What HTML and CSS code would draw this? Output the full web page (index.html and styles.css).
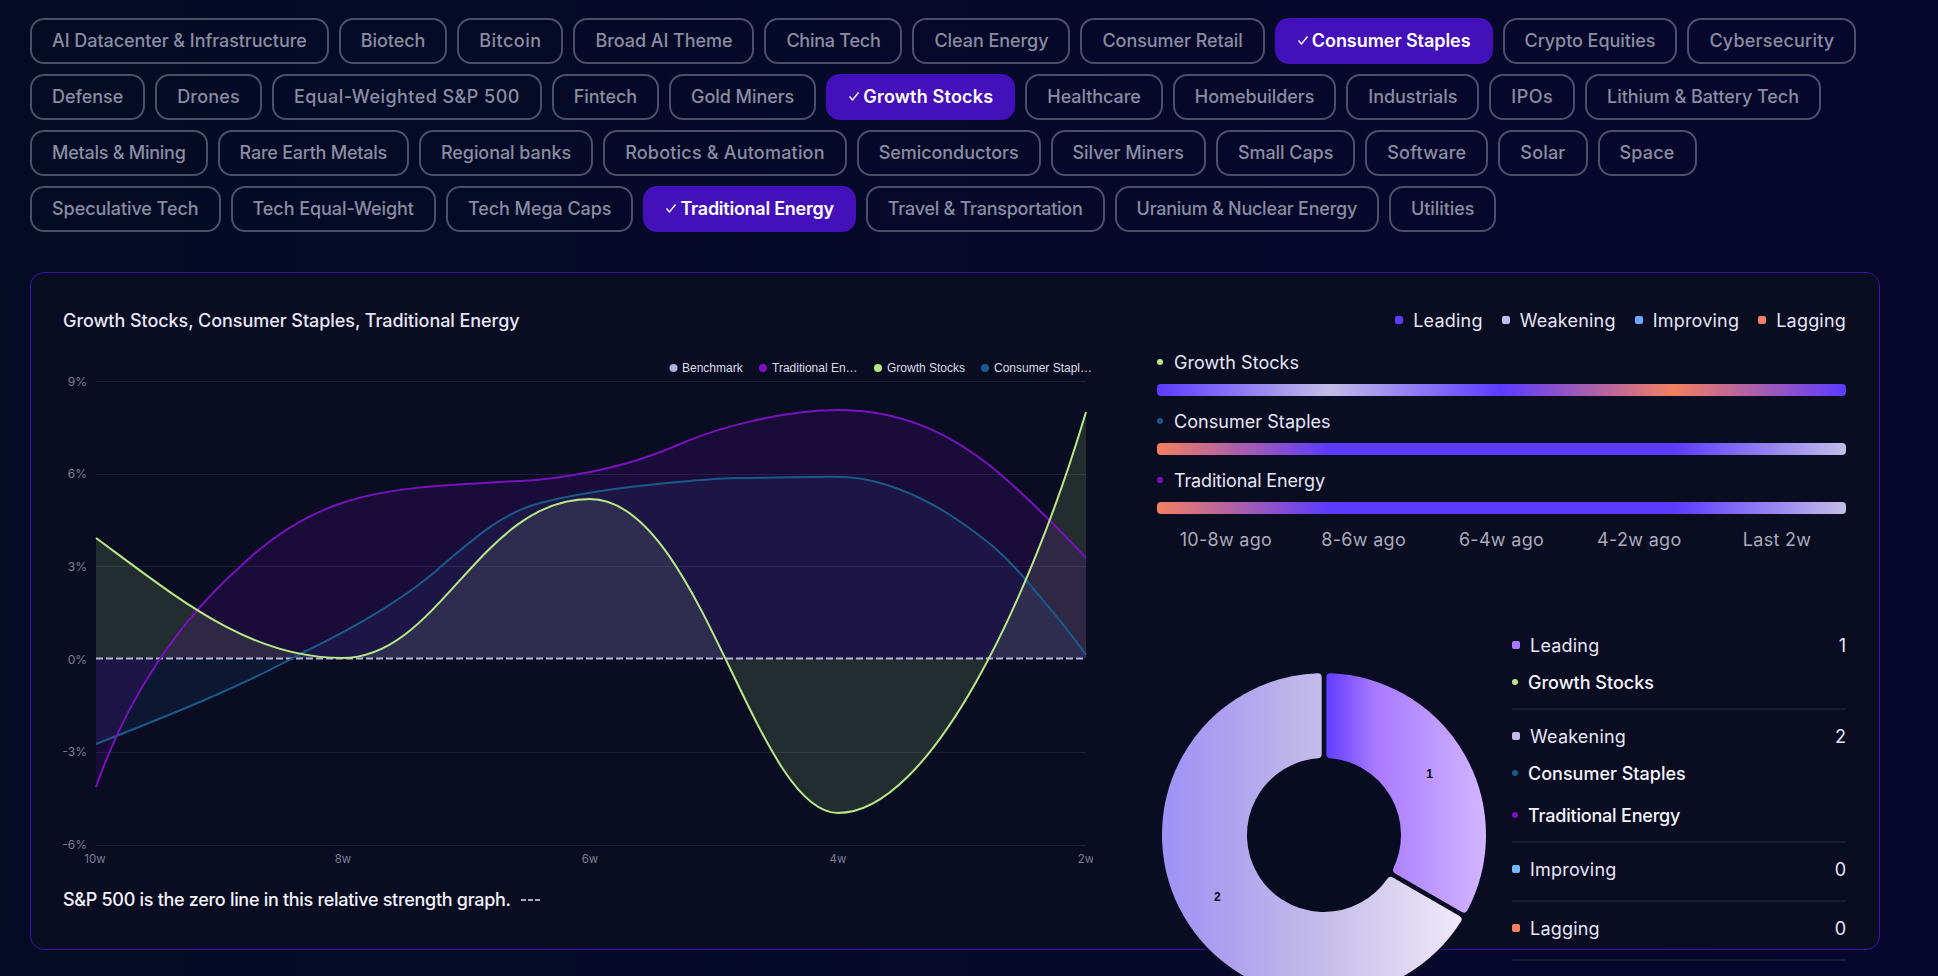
FILE: index.html
```html
<!DOCTYPE html>
<html lang="en">
<head>
<meta charset="utf-8">
<title>Sector comparison</title>
<link rel="stylesheet" href="styles.css">
</head>
<body>
<main class="page">
  <div class="chips">
    <span class="chip">AI Datacenter &amp; Infrastructure</span>
    <span class="chip">Biotech</span>
    <span class="chip chip-wide">Bitcoin</span>
    <span class="chip">Broad AI Theme</span>
    <span class="chip chip-tight">China Tech</span>
    <span class="chip">Clean Energy</span>
    <span class="chip">Consumer Retail</span>
    <span class="chip chip-on"><svg class="check" viewBox="0 0 12 12"><path d="M1.5 6.5 L4.5 10 L10.5 2.5"/></svg>Consumer Staples</span>
    <span class="chip">Crypto Equities</span>
    <span class="chip chip-loose">Cybersecurity</span>
    <span class="chip">Defense</span>
    <span class="chip chip-loose">Drones</span>
    <span class="chip chip-wide">Equal-Weighted S&amp;P 500</span>
    <span class="chip">Fintech</span>
    <span class="chip">Gold Miners</span>
    <span class="chip chip-on chip-loose"><svg class="check" viewBox="0 0 12 12"><path d="M1.5 6.5 L4.5 10 L10.5 2.5"/></svg>Growth Stocks</span>
    <span class="chip">Healthcare</span>
    <span class="chip">Homebuilders</span>
    <span class="chip">Industrials</span>
    <span class="chip chip-wide">IPOs</span>
    <span class="chip">Lithium &amp; Battery Tech</span>
    <span class="chip chip-tight">Metals &amp; Mining</span>
    <span class="chip chip-tight">Rare Earth Metals</span>
    <span class="chip">Regional banks</span>
    <span class="chip chip-loose">Robotics &amp; Automation</span>
    <span class="chip">Semiconductors</span>
    <span class="chip">Silver Miners</span>
    <span class="chip">Small Caps</span>
    <span class="chip chip-loose">Software</span>
    <span class="chip chip-loose">Solar</span>
    <span class="chip chip-loose">Space</span>
    <span class="chip">Speculative Tech</span>
    <span class="chip">Tech Equal-Weight</span>
    <span class="chip">Tech Mega Caps</span>
    <span class="chip chip-on chip-tight"><svg class="check" viewBox="0 0 12 12"><path d="M1.5 6.5 L4.5 10 L10.5 2.5"/></svg>Traditional Energy</span>
    <span class="chip chip-tight">Travel &amp; Transportation</span>
    <span class="chip chip-tight">Uranium &amp; Nuclear Energy</span>
    <span class="chip">Utilities</span>
  </div>

  <section class="card">
    <div class="left">
      <h2 class="title">Growth Stocks, Consumer Staples, Traditional Energy</h2>
      <svg class="chart" viewBox="63 340 1030 540" width="1030" height="540">
        <g class="grid">
          <line x1="96" x2="1086" y1="381.5" y2="381.5"/>
          <line x1="96" x2="1086" y1="474.5" y2="474.5"/>
          <line x1="96" x2="1086" y1="566.5" y2="566.5"/>
          <line x1="96" x2="1086" y1="752.5" y2="752.5"/>
          <line x1="96" x2="1086" y1="845.5" y2="845.5"/>
        </g>
        <g class="ylab">
          <text x="87" y="386">9%</text>
          <text x="87" y="478">6%</text>
          <text x="87" y="571">3%</text>
          <text x="87" y="664">0%</text>
          <text x="87" y="756">-3%</text>
          <text x="87" y="849">-6%</text>
        </g>
        <g class="xlab">
          <text x="95" y="863">10w</text>
          <text x="343" y="863">8w</text>
          <text x="590" y="863">6w</text>
          <text x="838" y="863">4w</text>
          <text x="1086" y="863">2w</text>
        </g>
        <path class="fill-green" d="M96,538 C180,600 250,658 342,658 C440,658 480,499 590,499 C700,499 755,813 838,813 C930,813 1030,600 1086,412 L1086,658 L96,658 Z"/>
        <path class="fill-blue" d="M96,744 C170,715 245,685 300,654 C350,630 405,600 445,563 C478,535 505,511 544,502 C580,493 625,487 667,483 C700,480 720,478 739,478 C780,478 820,476 846,477 C880,479 920,495 953,517 C985,538 1005,555 1026,580 C1045,603 1065,625 1086,655 L1086,658 L96,658 Z"/>
        <path class="fill-purple" d="M96,787 C128,695 180,620 241,566 C268,540 300,517 342,503 C385,488 440,485 520,481 C545,480 565,477 590,472 C625,465 650,457 685,442 C720,427 785,410 838,410 C900,410 950,432 999,473 C1030,500 1060,530 1086,558 L1086,658 L96,658 Z"/>
        <line class="zero" x1="96" x2="1086" y1="658.5" y2="658.5"/>
        <path class="line-blue" d="M96,744 C170,715 245,685 300,654 C350,630 405,600 445,563 C478,535 505,511 544,502 C580,493 625,487 667,483 C700,480 720,478 739,478 C780,478 820,476 846,477 C880,479 920,495 953,517 C985,538 1005,555 1026,580 C1045,603 1065,625 1086,655"/>
        <path class="line-purple" d="M96,787 C128,695 180,620 241,566 C268,540 300,517 342,503 C385,488 440,485 520,481 C545,480 565,477 590,472 C625,465 650,457 685,442 C720,427 785,410 838,410 C900,410 950,432 999,473 C1030,500 1060,530 1086,558"/>
        <path class="line-green" d="M96,538 C180,600 250,658 342,658 C440,658 480,499 590,499 C700,499 755,813 838,813 C930,813 1030,600 1086,412"/>
        <g class="clegend">
          <circle class="dot-bench" cx="673.5" cy="368" r="4"/>
          <text x="682" y="372">Benchmark</text>
          <circle class="dot-purple" cx="763" cy="368" r="4"/>
          <text x="772" y="372">Traditional En…</text>
          <circle class="dot-green" cx="878" cy="368" r="4"/>
          <text x="887" y="372">Growth Stocks</text>
          <circle class="dot-blue" cx="985" cy="368" r="4"/>
          <text x="994" y="372">Consumer Stapl…</text>
        </g>
      </svg>
      <p class="note">S&amp;P 500 is the zero line in this relative strength graph.<span class="dashes"></span></p>
    </div>

    <div class="right">
      <div class="keys">
        <span class="key"><i class="sq sq-leading"></i>Leading</span>
        <span class="key"><i class="sq sq-weakening"></i>Weakening</span>
        <span class="key"><i class="sq sq-improving"></i>Improving</span>
        <span class="key"><i class="sq sq-lagging"></i>Lagging</span>
      </div>
      <div class="rows">
        <div class="row">
          <div class="row-label"><i class="dot bg-green"></i>Growth Stocks</div>
          <div class="bar bar-growth"></div>
        </div>
        <div class="row">
          <div class="row-label"><i class="dot bg-blue"></i>Consumer Staples</div>
          <div class="bar bar-lag"></div>
        </div>
        <div class="row">
          <div class="row-label row-tight"><i class="dot bg-purple"></i>Traditional Energy</div>
          <div class="bar bar-lag"></div>
        </div>
      </div>
      <div class="weeks">
        <span>10-8w ago</span><span>8-6w ago</span><span>6-4w ago</span><span>4-2w ago</span><span>Last 2w</span>
      </div>
      <div class="lower">
        <svg class="donut" viewBox="1157 619 355 378" width="355" height="378">
          <defs>
            <linearGradient id="g1" gradientUnits="userSpaceOnUse" x1="2" x2="162" y1="0" y2="0">
              <stop offset="0" stop-color="#5f3dff"/>
              <stop offset="0.3" stop-color="#a878ff"/>
              <stop offset="1" stop-color="#d2b6ff"/>
            </linearGradient>
            <linearGradient id="g2" gradientUnits="userSpaceOnUse" x1="-162" x2="140" y1="0" y2="0">
              <stop offset="0" stop-color="#9f90f5"/>
              <stop offset="0.53" stop-color="#c4bce8"/>
              <stop offset="1" stop-color="#f1e9fb"/>
            </linearGradient>
          </defs>
          <g transform="translate(1324 835)">
            <circle class="halo" r="158"/>
            <circle class="hole" r="77"/>
            <path class="seg seg-one" d="M6.3,-157.87 A158,158 0 0 1 139.87,73.48 L73.08,34.92 A81,81 0 0 0 6.3,-80.75 Z"/>
            <path class="seg seg-two" d="M133.57,84.4 A158,158 0 1 1 -6.3,-157.87 L-6.3,-80.75 A81,81 0 1 0 66.78,45.84 Z"/>
            <text class="seg-label" x="105.6" y="-57">1</text>
            <text class="seg-label" x="-106.6" y="66">2</text>
          </g>
        </svg>
        <div class="groups">
          <div class="group">
            <div class="group-head"><span><i class="sq sq-leading2"></i>Leading</span><span>1</span></div>
            <ul class="items">
              <li><i class="dot bg-green"></i>Growth Stocks</li>
            </ul>
          </div>
          <div class="group">
            <div class="group-head"><span><i class="sq sq-weakening"></i>Weakening</span><span>2</span></div>
            <ul class="items">
              <li><i class="dot bg-blue"></i>Consumer Staples</li>
              <li class="item-tight"><i class="dot bg-purple"></i>Traditional Energy</li>
            </ul>
          </div>
          <div class="group">
            <div class="group-head"><span><i class="sq sq-improving2"></i>Improving</span><span>0</span></div>
          </div>
          <div class="group">
            <div class="group-head"><span><i class="sq sq-lagging"></i>Lagging</span><span>0</span></div>
          </div>
        </div>
      </div>
    </div>
  </section>
</main>
</body>
</html>
```
FILE: styles.css
```css
* { box-sizing: border-box; }
html, body { margin: 0; height: 100%; overflow: hidden; }
body {
  background: linear-gradient(90deg, #040b24 0%, #06082a 60%, #07062c 100%);
  font-family: Inter, "Liberation Sans", sans-serif;
  color: #e8e8f8;
}
.page { padding: 18px 58px 0 30px; height: 976px; overflow: hidden; }

.chips { display: flex; flex-wrap: wrap; gap: 10px; }
.chip {
  display: inline-flex;
  align-items: center;
  height: 46px;
  padding: 0 20px 2px;
  border: 2px solid #4b4f6a;
  border-radius: 14px;
  font-size: 18px;
  font-weight: 500;
  letter-spacing: -0.06px;
  color: #8a8da2;
  white-space: nowrap;
}
.chip-wide { letter-spacing: 0.45px; }
.chip-loose { letter-spacing: 0.2px; }
.chip-tight { letter-spacing: -0.25px; }
.chip-on {
  background: #4310ba;
  border-color: #4310ba;
  color: #fff;
  font-weight: 600;
}
.check {
  width: 12px;
  height: 12px;
  margin-right: 3px;
  fill: none;
  stroke: #fff;
  stroke-width: 1.4;
}

.card {
  margin-top: 40px;
  height: 678px;
  padding: 33px 33px 0 32px;
  border: 1px solid #3a12b0;
  border-radius: 14px;
  background: #0a0c22;
  display: grid;
  grid-template-columns: 1030px 689px;
  column-gap: 64px;
  align-items: start;
}

.title {
  margin: 0 0 4px;
  font-size: 18px;
  line-height: 30px;
  font-weight: 500;
  letter-spacing: -0.06px;
  color: #e6e6f8;
}
.chart { display: block; }
.grid line { stroke: #1d1f38; stroke-width: 1; }
.ylab text { font-size: 12px; fill: #7b7e93; text-anchor: end; }
.xlab text { font-size: 11.5px; fill: #7b7e93; text-anchor: middle; }
.fill-purple { fill: #7a10c0; fill-opacity: .15; }
.fill-blue { fill: #1a5a8a; fill-opacity: .15; }
.fill-green { fill: #b8e986; fill-opacity: .15; }
.zero { stroke: #b4b4dc; stroke-width: 2; stroke-dasharray: 7 3; }
.line-blue, .line-purple, .line-green { fill: none; stroke-width: 2; }
.line-blue { stroke: #1a5a8a; }
.line-purple { stroke: #7a10c0; }
.line-green { stroke: #b8e986; }
.clegend text { font-family: "Liberation Sans", sans-serif; font-size: 12px; fill: #dcdce8; }
.dot-bench { fill: #aab2dc; }
.dot-purple { fill: #7a10c0; }
.dot-green { fill: #b8e986; }
.dot-blue { fill: #1a5a8a; }

.note {
  margin: 6px 0 0;
  font-size: 18px;
  line-height: 28px;
  font-weight: 500;
  letter-spacing: -0.3px;
  color: #f2f2fa;
  display: flex;
  align-items: center;
}
.dashes {
  width: 19px;
  height: 2px;
  margin-left: 10px;
  background: repeating-linear-gradient(90deg, #a8a8c8 0 5px, transparent 5px 7px);
}

.keys {
  height: 28px;
  display: flex;
  justify-content: flex-end;
  gap: 19px;
}
.key, .group-head span:first-child {
  display: inline-flex;
  align-items: center;
  font-size: 18px;
  letter-spacing: 0.2px;
  color: #e6e6f8;
}
.sq {
  width: 8px;
  height: 8px;
  border-radius: 2px;
  margin-right: 10px;
  flex: none;
}
.sq-leading { background: #5b3bff; }
.sq-leading2 { background: #a878ff; }
.sq-weakening { background: #c4bce8; }
.sq-improving { background: #6ea8ff; }
.sq-improving2 { background: #70b8f8; }
.sq-lagging { background: #f28060; }

.rows { margin-top: 16px; display: grid; row-gap: 13px; }
.row-label {
  height: 24px;
  display: flex;
  align-items: center;
  font-size: 18px;
  letter-spacing: 0.05px;
  color: #e6e6f8;
}
.row-tight { letter-spacing: -0.15px; }
.dot {
  width: 6px;
  height: 6px;
  border-radius: 50%;
  margin-right: 11px;
  flex: none;
}
.bg-green { background: #b8e986; }
.bg-blue { background: #1a5a8a; }
.bg-purple { background: #7a10c0; }
.bar { height: 12px; margin-top: 10px; border-radius: 4px; }
.bar-growth { background: linear-gradient(90deg, #5b3bff 0%, #c4bce8 25%, #5b3bff 50%, #f28060 75%, #5b3bff 100%); }
.bar-lag { background: linear-gradient(90deg, #f28060 0%, #5b3bff 25%, #5b3bff 75%, #c4bce8 100%); }

.weeks {
  margin-top: 14px;
  height: 24px;
  display: grid;
  grid-template-columns: repeat(5, 1fr);
  text-align: center;
  font-size: 18px;
  line-height: 24px;
  letter-spacing: 0.3px;
  color: #a9aaba;
}

.lower {
  margin-top: 67px;
  display: grid;
  grid-template-columns: 355px 334px;
  height: 378px;
}
.donut { display: block; overflow: visible; position: relative; }
.halo { fill: none; stroke: #0a0c22; stroke-width: 14; }
.hole { fill: #070c20; }
.seg { stroke-width: 8; stroke-linejoin: round; }
.seg-one { fill: url(#g1); stroke: url(#g1); }
.seg-two { fill: url(#g2); stroke: url(#g2); }
.seg-label {
  font-family: "Liberation Sans", sans-serif;
  font-size: 12px;
  font-weight: 700;
  fill: #0a0a18;
  text-anchor: middle;
}

.group {
  padding: 14px 0 19px;
  border-bottom: 2px solid #191b34;
}
.group-head {
  height: 24px;
  display: flex;
  justify-content: space-between;
  align-items: center;
  font-size: 18px;
  color: #e6e6f8;
}
.items {
  list-style: none;
  margin: 13px 0 -5px;
  padding: 0;
  display: grid;
  row-gap: 18px;
}
.items li {
  height: 24px;
  display: flex;
  align-items: center;
  font-size: 18px;
  font-weight: 500;
  letter-spacing: 0;
  color: #f4f4fc;
}
.items .item-tight { letter-spacing: -0.2px; }
.items .dot { margin-right: 10px; }
```
